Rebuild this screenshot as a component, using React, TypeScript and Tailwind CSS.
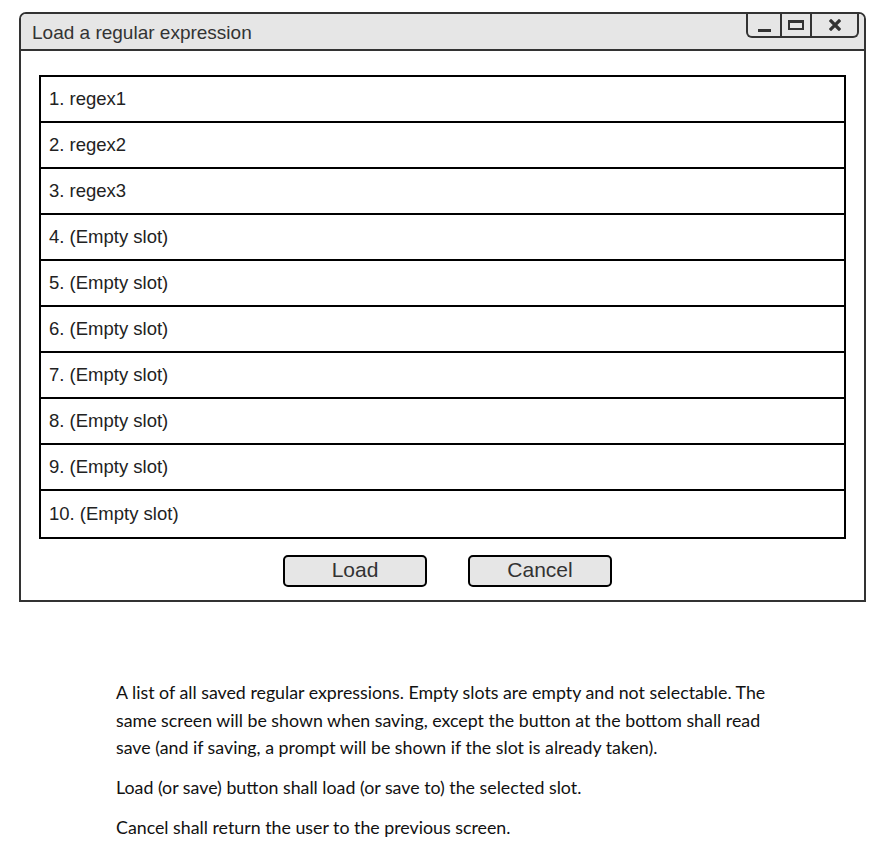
const slots = [
  "1. regex1",
  "2. regex2",
  "3. regex3",
  "4. (Empty slot)",
  "5. (Empty slot)",
  "6. (Empty slot)",
  "7. (Empty slot)",
  "8. (Empty slot)",
  "9. (Empty slot)",
  "10. (Empty slot)",
];

function WindowButtons() {
  return (
    <div className="mr-[5px] flex h-[24px] rounded-b-[6px] border-x-2 border-b-2 border-[#333] bg-[#e6e6e6]">
      <div className="flex w-[32px] items-end justify-center pb-[4px]">
        <div className="h-[3px] w-[13px] bg-[#333]" />
      </div>
      <div className="flex w-[30px] items-center justify-center border-l-2 border-[#333]">
        <div className="h-[10px] w-[16px] border-2 border-t-[3px] border-[#333]" />
      </div>
      <div className="flex w-[47px] items-center justify-center border-l-2 border-[#333]">
        <svg width="12" height="12" viewBox="0 0 12 12">
          <path d="M2 2L10 10M10 2L2 10" stroke="#333" strokeWidth="3.2" strokeLinecap="square" />
        </svg>
      </div>
    </div>
  );
}

export default function App() {
  return (
    <div className="min-h-[859px] bg-white pt-[12px] font-['Liberation_Sans',Arial,sans-serif]">
      <div className="ml-[19px] w-[847px] overflow-hidden rounded-t-[7px] border-2 border-[#333] bg-white">
        <div className="flex h-[37px] items-start justify-between border-b-2 border-[#333] bg-[#e6e6e6]">
          <span className="pl-[11px] pt-[5px] text-[19px] text-[#333]">Load a regular expression</span>
          <WindowButtons />
        </div>

        <div className="px-[18px] pt-[24px] pb-[13px]">
          <div className="divide-y-2 divide-black border-2 border-black">
            {slots.map((s) => (
              <div key={s} className="flex h-[46px] items-center pl-[8px] text-[18.5px] text-[#222]">
                {s}
              </div>
            ))}
          </div>

          <div className="mt-[16px] flex justify-center gap-[41px] pl-[10px]">
            <button className="flex h-[32px] w-[144px] items-center justify-center rounded-[5px] border-2 border-black bg-[#e6e6e6] pb-[3px] text-[21px] leading-none text-[#333]">
              Load
            </button>
            <button className="flex h-[32px] w-[144px] items-center justify-center rounded-[5px] border-2 border-black bg-[#e6e6e6] pb-[3px] text-[21px] leading-none text-[#333]">
              Cancel
            </button>
          </div>
        </div>
      </div>

      <div className="ml-[116px] mt-[77px] font-['Lato',sans-serif] text-[17.8px] leading-[27.5px] text-[#111]">
        <p>
          A list of all saved regular expressions. Empty slots are empty and not selectable. The
          <br />
          same screen will be shown when saving, except the button at the bottom shall read
          <br />
          save (and if saving, a prompt will be shown if the slot is already taken).
        </p>
        <p className="mt-[12.5px]">Load (or save) button shall load (or save to) the selected slot.</p>
        <p className="mt-[12.5px]">Cancel shall return the user to the previous screen.</p>
      </div>
    </div>
  );
}
